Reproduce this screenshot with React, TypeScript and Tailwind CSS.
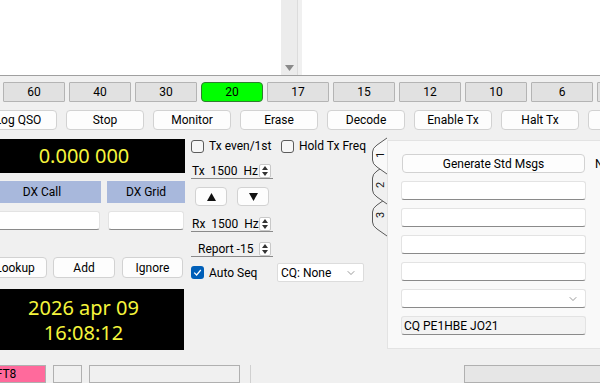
import { ChevronDown } from 'lucide-react'

const BANDS = ['80', '60', '40', '30', '20', '17', '15', '12', '10', '6', '2']
const CONTROLS = ['Log QSO', 'Stop', 'Monitor', 'Erase', 'Decode', 'Enable Tx', 'Halt Tx', 'Tune']

function CheckBox({ checked, label }: { checked?: boolean; label: string }) {
  return (
    <div className="flex items-center gap-[5px] h-[12px] whitespace-nowrap">
      {checked ? (
        <span className="w-[13px] h-[13px] shrink-0 rounded-[3px] bg-[#005fb8] flex items-center justify-center">
          <svg width="9" height="9" viewBox="0 0 9 9">
            <path d="M1.2 4.6 L3.6 7 L7.8 2" fill="none" stroke="#fff" strokeWidth="1.2" />
          </svg>
        </span>
      ) : (
        <span className="w-[13px] h-[13px] shrink-0 rounded-[3px] border border-[#5c5c5c] bg-[#f7f7f7]" />
      )}
      <span className="leading-none">{label}</span>
    </div>
  )
}

function SpinArrows() {
  return (
    <span className="w-[12px] h-[14px] border border-[#c8c8c8] rounded-[2px] bg-white flex flex-col items-center justify-center gap-[2px]">
      <svg width="6" height="4" viewBox="0 0 6 4"><path d="M0 4 L3 0 L6 4 Z" fill="#333" /></svg>
      <svg width="6" height="4" viewBox="0 0 6 4"><path d="M0 0 L3 4 L6 0 Z" fill="#333" /></svg>
    </span>
  )
}

function SpinBox({ children, className = '' }: { children: React.ReactNode; className?: string }) {
  return (
    <div className={`w-[82px] h-[16px] flex items-center justify-between border-b border-[#8a8a8a] ${className}`}>
      <span className="whitespace-pre leading-none">{children}</span>
      <span className="mr-[2px]"><SpinArrows /></span>
    </div>
  )
}

function LineEdit({ className = '', children }: { className?: string; children?: React.ReactNode }) {
  return (
    <div className={`h-[19px] rounded-[3px] border border-[#e3e3e3] border-b-[#8a8a8a] flex items-center px-[2px] ${className}`}>
      {children}
    </div>
  )
}

function PushButton({ label, className = '' }: { label: string; className?: string }) {
  return (
    <div className={`h-full rounded-[4px] border border-[#d2d2d2] bg-[#fdfdfd] flex items-center justify-center shrink-0 whitespace-nowrap ${className}`}>
      {label}
    </div>
  )
}

function TabStrip() {
  // West tabs: 1 selected, 2 and 3 behind
  const tab = (t: number, b: number) =>
    `M16 ${t} L6 ${t + 7} Q1.5 ${t + 10} 1.5 ${t + 14} L1.5 ${b - 14} Q1.5 ${b - 10} 6 ${b - 7} L16 ${b}`
  return (
    <svg width="17" height="102" viewBox="0 0 17 102" className="font-['Roboto',sans-serif]">
      <path d={tab(62, 100)} fill="#f0f0f0" stroke="#5a5a5a" strokeWidth="1" />
      <path d={tab(28, 68)} fill="#f0f0f0" stroke="#5a5a5a" strokeWidth="1" />
      <path d={tab(2, 38)} fill="#f9f9f9" stroke="#5a5a5a" strokeWidth="1" />
      <text x="0" y="0" fontSize="11" fill="#111" textAnchor="middle" transform="translate(13 19) rotate(-90)">1</text>
      <text x="0" y="0" fontSize="11" fill="#111" textAnchor="middle" transform="translate(13 49) rotate(-90)">2</text>
      <text x="0" y="0" fontSize="11" fill="#111" textAnchor="middle" transform="translate(13 79) rotate(-90)">3</text>
    </svg>
  )
}

export default function App() {
  return (
    <div className="w-[600px] h-[383px] overflow-hidden bg-[#f0f0f0] flex flex-col font-['Roboto',sans-serif] text-[12px] text-black">
      {/* Decode panes */}
      <div className="h-[76px] shrink-0 flex border-b border-[#a0a0a0]">
        <div className="w-[298px] bg-white flex justify-end">
          <div className="w-[17px] bg-[#ececec] border-r border-[#dcdcdc] flex items-end justify-center pb-[4px]">
            <svg width="9" height="6" viewBox="0 0 9 6"><path d="M0 0 L9 0 L4.5 6 Z" fill="#8a8a8a" /></svg>
          </div>
        </div>
        <div className="w-[4px]" />
        <div className="flex-1 bg-white" />
      </div>

      {/* Band buttons */}
      <div className="mt-[6px] h-[20px] shrink-0 flex gap-[4px] ml-[-63px]">
        {BANDS.map((b) => (
          <div
            key={b}
            className={
              b === '20'
                ? 'w-[62px] shrink-0 rounded-[4px] bg-[#00ff00] border border-[#2f7d2f] flex items-center justify-center'
                : 'w-[62px] shrink-0 rounded-[1px] bg-[#e1e1e1] border border-[#b4b4b4] flex items-center justify-center'
            }
          >
            {b}
          </div>
        ))}
      </div>

      {/* Control buttons */}
      <div className="mt-[8px] h-[20px] shrink-0 flex gap-[9px] ml-[-21px]">
        {CONTROLS.map((c) => (
          <PushButton key={c} label={c} className="w-[78px]" />
        ))}
      </div>

      {/* Main area */}
      <div className="h-[235px] shrink-0 flex items-start">
        {/* Left column */}
        <div className="ml-[-17px] w-[202px] shrink-0 flex flex-col">
          <div className="mt-[9px] h-[34px] bg-black text-[#f5f53c] text-[20px] font-['Noto_Sans',sans-serif] flex items-center justify-center">
            0.000 000
          </div>
          <div className="mt-[8px] h-[22px] flex gap-[6px]">
            <div className="w-[118px] bg-[#a8b8dc] flex items-center justify-center">DX Call</div>
            <div className="w-[78px] bg-[#a8b8dc] flex items-center justify-center">DX Grid</div>
          </div>
          <div className="mt-[8px] flex">
            <LineEdit className="w-[117px] bg-white h-[18px]" />
            <LineEdit className="ml-[8px] w-[76px] bg-white h-[18px]" />
          </div>
          <div className="mt-[27px] h-[21px] flex">
            <PushButton label="Lookup" className="w-[64px]" />
            <PushButton label="Add" className="ml-[6px] w-[62px]" />
            <PushButton label="Ignore" className="ml-[7px] w-[61px]" />
          </div>
          <div className="mt-[11px] h-[61px] w-[201px] bg-black text-[#f5f53c] text-[20px] leading-[25px] font-['Noto_Sans',sans-serif] flex flex-col items-center justify-center">
            <span>2026 apr 09</span>
            <span>16:08:12</span>
          </div>
        </div>

        {/* Middle column */}
        <div className="ml-[6px] w-[175px] shrink-0 flex flex-col">
          <div className="mt-[10px] flex">
            <div className="w-[90px]"><CheckBox label="Tx even/1st" /></div>
            <CheckBox label="Hold Tx Freq" />
          </div>
          <SpinBox className="mt-[11px] pl-[1px]">{'Tx  1500  Hz'}</SpinBox>
          <div className="mt-[8px] h-[19px] flex">
            <div className="ml-[4px] w-[32px] rounded-[4px] border border-[#d2d2d2] bg-[#fdfdfd] flex items-center justify-center">
              <svg width="9" height="8" viewBox="0 0 9 8"><path d="M0 8 L4.5 0 L9 8 Z" fill="#111" /></svg>
            </div>
            <div className="ml-[10px] w-[32px] rounded-[4px] border border-[#d2d2d2] bg-[#fdfdfd] flex items-center justify-center">
              <svg width="9" height="8" viewBox="0 0 9 8"><path d="M0 0 L4.5 8 L9 0 Z" fill="#111" /></svg>
            </div>
          </div>
          <SpinBox className="mt-[10px] pl-[1px]">{'Rx  1500  Hz'}</SpinBox>
          <SpinBox className="mt-[9px] pl-[7px]">{'Report -15'}</SpinBox>
          <div className="mt-[6px] h-[19px] flex items-center">
            <div className="w-[86px]"><CheckBox checked label="Auto Seq" /></div>
            <div className="w-[87px] h-[19px] bg-white border border-[#dcdcdc] rounded-[2px] flex items-center justify-between pl-[3px] pr-[6px]">
              <span>CQ: None</span>
              <ChevronDown size={12} strokeWidth={1.2} className="text-[#555]" />
            </div>
          </div>
        </div>

        {/* Tab widget */}
        <div className="ml-[5px] flex shrink-0">
          <div className="mt-[6px] w-[16px] shrink-0">
            <TabStrip />
          </div>
          <div className="mt-[10px] w-[240px] h-[209px] bg-[#f9f9f9] border border-[#e3e3e3] shrink-0 pl-[13px] pt-[13px] flex flex-col gap-[8px]">
            <div className="h-[19px] flex items-center">
              <PushButton label="Generate Std Msgs" className="ml-[1px] w-[183px]" />
              <span className="ml-[10px]">Next</span>
            </div>
            <LineEdit className="w-[185px] bg-white" />
            <LineEdit className="w-[185px] bg-white" />
            <LineEdit className="w-[185px] bg-white" />
            <LineEdit className="w-[185px] bg-white" />
            <LineEdit className="w-[185px] bg-white justify-end pr-[6px]">
              <ChevronDown size={12} strokeWidth={1.2} className="text-[#555]" />
            </LineEdit>
            <LineEdit className="w-[185px] bg-[#f3f3f3] h-[18px]">CQ PE1HBE JO21</LineEdit>
          </div>
        </div>
      </div>

      {/* Status bar */}
      <div className="h-[18px] shrink-0 flex items-stretch">
        <div className="ml-[-34px] w-[80px] bg-[#ff6a9c] border border-[#b0b0b0] flex items-center justify-center">FT8</div>
        <div className="ml-[7px] w-[29px] border border-[#b0b0b0]" />
        <div className="ml-[7px] w-[151px] border border-[#b0b0b0]" />
        <div className="ml-[10px] w-px bg-[#d0d0d0]" />
        <div className="ml-auto w-[140px] mr-[-4px] bg-[#e6e6e6] border border-[#b0b0b0]" />
      </div>
    </div>
  )
}
